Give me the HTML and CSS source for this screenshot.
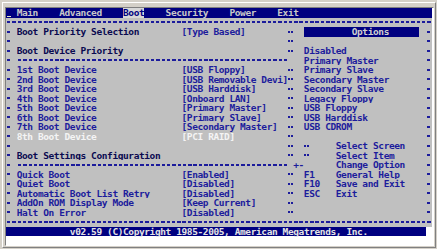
FILE: index.html
```html
<!DOCTYPE html>
<html>
<head>
<meta charset="utf-8">
<title>BIOS Setup Utility - Boot</title>
<link rel="stylesheet" href="styles.css">
</head>
<body>
<div class="window">
  <div class="screen">
    <div class="menu"><span class="cur"> </span> Main    Advanced    <span class="tab">Boot</span>    Security    Power    Exit</div>
    <div class="row"><i class="hr full"></i></div>
    <div class="row"><i class="v"></i><span class="lbl hd">Boot Priority Selection</span><span class="val">[Type Based]</span><i class="d"></i><span class="rt"><span class="opt">Options</span></span><i class="v end"></i></div>
    <div class="row"><i class="v"></i><i class="d"></i><i class="v end"></i></div>
    <div class="row"><i class="v"></i><span class="lbl hd">Boot Device Priority</span><i class="d"></i><span class="rt">Disabled</span><i class="v end"></i></div>
    <div class="row"><i class="v"></i><i class="hr left"></i><span class="rt">Primary Master</span><i class="v end"></i></div>
    <div class="row"><i class="v"></i><span class="lbl">1st Boot Device</span><span class="val">[USB Floppy]</span><i class="d"></i><span class="rt">Primary Slave</span><i class="v end"></i></div>
    <div class="row"><i class="v"></i><span class="lbl">2nd Boot Device</span><span class="val">[USB Removable Devi]</span><i class="d"></i><span class="rt">Secondary Master</span><i class="v end"></i></div>
    <div class="row"><i class="v"></i><span class="lbl">3rd Boot Device</span><span class="val">[USB Harddisk]</span><i class="d"></i><span class="rt">Secondary Slave</span><i class="v end"></i></div>
    <div class="row"><i class="v"></i><span class="lbl">4th Boot Device</span><span class="val">[Onboard LAN]</span><i class="d"></i><span class="rt">Legacy Floppy</span><i class="v end"></i></div>
    <div class="row"><i class="v"></i><span class="lbl">5th Boot Device</span><span class="val">[Primary Master]</span><i class="d"></i><span class="rt">USB Floppy</span><i class="v end"></i></div>
    <div class="row"><i class="v"></i><span class="lbl">6th Boot Device</span><span class="val">[Primary Slave]</span><i class="d"></i><span class="rt">USB Harddisk</span><i class="v end"></i></div>
    <div class="row"><i class="v"></i><span class="lbl">7th Boot Device</span><span class="val">[Secondary Master]</span><i class="d"></i><span class="rt">USB CDROM</span><i class="v end"></i></div>
    <div class="row dis"><i class="v"></i><span class="lbl">8th Boot Device</span><span class="val">[PCI RAID]</span><i class="d"></i><i class="v end"></i></div>
    <div class="row"><i class="v"></i><i class="d"></i><span class="rt"><i class="arr"></i>     Select Screen</span><i class="v end"></i></div>
    <div class="row"><i class="v"></i><span class="lbl hd">Boot Settings Configuration</span><i class="d"></i><span class="rt"><i class="arr"></i>     Select Item</span><i class="v end"></i></div>
    <div class="row"><i class="v"></i><i class="hr left"></i><span class="mid">+-</span><span class="rt">      Change Option</span><i class="v end"></i></div>
    <div class="row"><i class="v"></i><span class="lbl">Quick Boot</span><span class="val">[Enabled]</span><i class="d"></i><span class="rt">F1    General Help</span><i class="v end"></i></div>
    <div class="row"><i class="v"></i><span class="lbl">Quiet Boot</span><span class="val">[Disabled]</span><i class="d"></i><span class="rt">F10   Save and Exit</span><i class="v end"></i></div>
    <div class="row"><i class="v"></i><span class="lbl">Automatic Boot List Retry</span><span class="val">[Disabled]</span><i class="d"></i><span class="rt">ESC   Exit</span><i class="v end"></i></div>
    <div class="row"><i class="v"></i><span class="lbl">AddOn ROM Display Mode</span><span class="val">[Keep Current]</span><i class="d"></i><i class="v end"></i></div>
    <div class="row"><i class="v"></i><span class="lbl">Halt On Error</span><span class="val">[Disabled]</span><i class="d"></i><i class="v end"></i></div>
    <div class="row"><i class="hr full"></i></div>
    <div class="status"><span class="sbar">v02.59 (C)Copyright 1985-2005, American Megatrends, Inc.</span></div>
  </div>
</div>
</body>
</html>
```

FILE: styles.css
```css
:root {
  --cw: 5.32px;
  --rh: 9.5px;
  --navy: #000080;
  --ink: #1c1c9c;
  --head: #0a0a50;
  --grey: #c0c0c0;
}

html, body {
  margin: 0;
  padding: 0;
}

body {
  background: #d4d0c8;
  width: 437px;
  height: 249px;
  overflow: hidden;
  font-family: "DejaVu Sans Mono", "Liberation Mono", monospace;
  font-size: 9.5px;
  font-weight: bold;
  letter-spacing: -0.4px;
}

.window {
  display: inline-block;
  margin: 2px 0 0 2px;
  border: 1px solid;
  border-color: #ffffff #808080 #808080 #ffffff;
  padding: 4px 1px 1px 2px;
}

.screen {
  width: calc(80 * var(--cw));
  border: 1px solid;
  border-color: #808080 #ffffff #ffffff #808080;
  background: #ffffff;
  padding: 0 1px 9px 0;
}

.menu {
  height: var(--rh);
  line-height: var(--rh);
  white-space: pre;
  background: var(--navy);
  color: #c8c8c8;
  overflow: hidden;
}

.tab {
  background: #d8d8d8;
  color: var(--navy);
}

.cur {
  display: inline-block;
  width: var(--cw);
  height: var(--rh);
  vertical-align: top;
  background: linear-gradient(#e6e6c8, #e6e6c8) 1px 7.8px / 4px 1.3px no-repeat;
}

.row {
  display: grid;
  grid-template-columns:
    var(--cw) var(--cw) calc(31 * var(--cw)) calc(20 * var(--cw))
    var(--cw) calc(2 * var(--cw)) calc(23 * var(--cw)) var(--cw);
  height: var(--rh);
  line-height: var(--rh);
  background: var(--grey);
  color: var(--ink);
  white-space: pre;
}

.row > * {
  grid-row: 1;
  overflow: hidden;
}

.v { grid-column: 1; }
.v.end { grid-column: 8; }
.lbl { grid-column: 3; }
.val { grid-column: 4; }
.d { grid-column: 5; }
.mid { grid-column: 6; }
.rt { grid-column: 7; }
.hr.left { grid-column: 3 / 5; }
.hr.full { grid-column: 1 / -1; }

.hd { color: var(--head); }
.dis .lbl, .dis .val { color: #f4f4f4; }

.v {
  background: linear-gradient(var(--ink), var(--ink)) center / 3px 2.4px no-repeat;
}

.d, .arr {
  background:
    linear-gradient(var(--ink), var(--ink)) 0.3px 50% / 2px 2.4px no-repeat,
    linear-gradient(var(--ink), var(--ink)) 3px 50% / 2px 2.4px no-repeat;
}

.arr {
  display: inline-block;
  width: var(--cw);
  height: var(--rh);
  vertical-align: top;
}

.hr {
  background: repeating-linear-gradient(90deg,
      transparent 0 0.9px, var(--ink) 0.9px 4.3px, transparent 4.3px var(--cw))
    0 50% / 100% 2px no-repeat;
}

.opt {
  display: block;
  width: calc(22 * var(--cw) - 2px);
  padding-left: calc(9 * var(--cw));
  background: var(--navy);
  color: #d0d0d0;
  box-sizing: border-box;
}

.status {
  height: var(--rh);
  line-height: var(--rh);
  white-space: pre;
  background: #ffffff;
}

.sbar {
  display: block;
  width: calc(79 * var(--cw));
  box-sizing: border-box;
  padding-left: calc(12 * var(--cw));
  background: var(--navy);
  color: #e4e4e4;
}
```
